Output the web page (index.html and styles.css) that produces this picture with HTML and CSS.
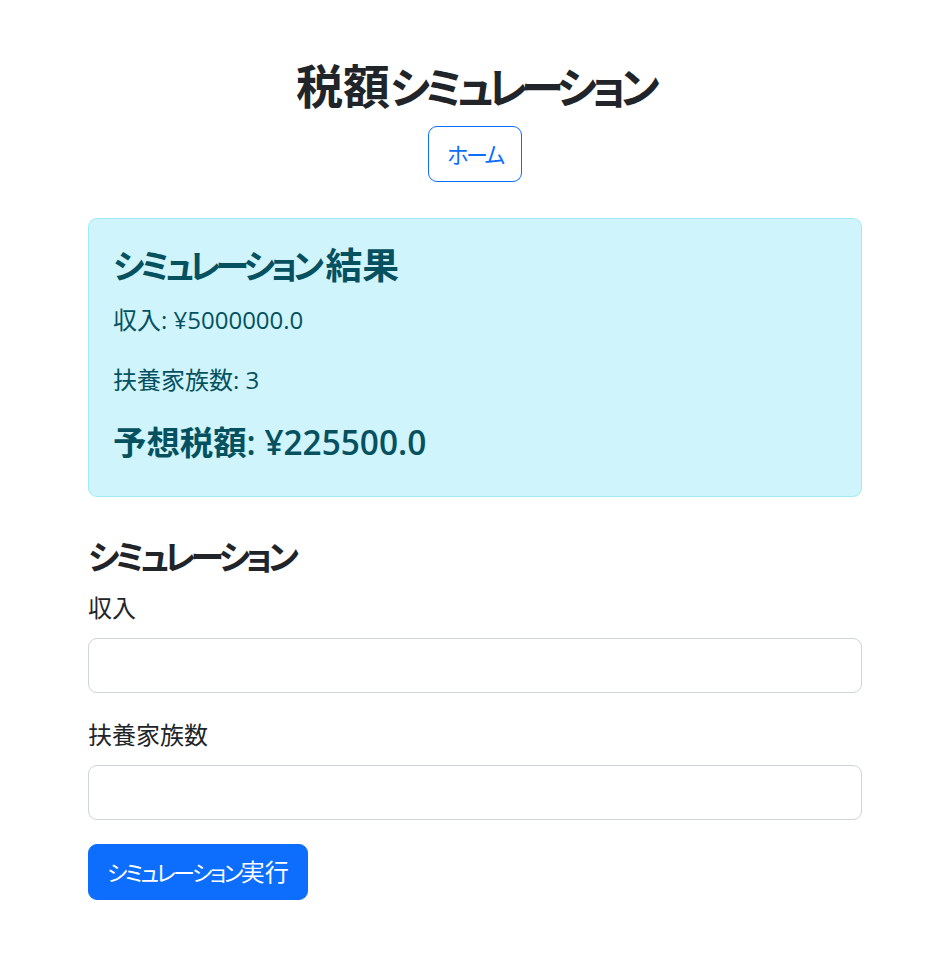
FILE: index.html
```html
<!DOCTYPE html>
<html lang="ja">
<head>
<meta charset="utf-8">
<title>税額シミュレーション</title>
<link rel="stylesheet" href="styles.css">
</head>
<body>
<div class="page">
  <h1 class="title">税額<span class="kana">シミュレーション</span></h1>
  <div class="nav">
    <a class="btn btn-outline" href="#"><span class="kana">ホーム</span></a>
  </div>

  <div class="alert">
    <h3 class="alert-heading"><span class="kana">シミュレーション</span>結果</h3>
    <p class="alert-line">収入: ¥5000000.0</p>
    <p class="alert-line">扶養家族数: 3</p>
    <h4 class="alert-result">予想税額: ¥225500.0</h4>
  </div>

  <h3 class="section-title"><span class="kana">シミュレーション</span></h3>
  <form class="form">
    <div class="field">
      <label class="label" for="income">収入</label>
      <input class="input" id="income" type="text">
    </div>
    <div class="field">
      <label class="label" for="deps">扶養家族数</label>
      <input class="input" id="deps" type="text">
    </div>
    <button class="btn btn-primary" type="button"><span class="kana">シミュレーション</span>実行</button>
  </form>
</div>
</body>
</html>
```

FILE: styles.css
```css
* { box-sizing: border-box; }

body {
  margin: 0;
  background: #fff;
  color: #212529;
  font-family: "Open Sans", "Noto Sans CJK JP", sans-serif;
  font-size: 24px;
  line-height: 1.5;
}

.kana {
  font-size: 0.92em;
  font-feature-settings: "palt";
  letter-spacing: -0.115em;
}

.title .kana,
.alert-heading .kana,
.section-title .kana {
  letter-spacing: -0.135em;
}

.alert-heading .kana {
  padding-right: 0.18em;
}

.page {
  padding: 58px 78px 40px 88px;
}

.title {
  margin: 0 0 12px;
  font-size: 47px;
  line-height: 1.2;
  font-weight: 700;
  text-align: center;
}

.nav {
  display: flex;
  justify-content: center;
  margin-bottom: 36px;
}

.btn {
  display: inline-block;
  padding: 9px 18px;
  font-family: "Open Sans", "Noto Sans CJK JP", sans-serif;
  font-size: 24px;
  line-height: 36px;
  border-radius: 9px;
  text-decoration: none;
  cursor: pointer;
}

.btn-outline {
  color: #0d6efd;
  border: 1px solid #0d6efd;
  background: transparent;
}

.btn-primary {
  color: #fff;
  background: #0d6efd;
  border: 1px solid #0d6efd;
}

.alert {
  background: #cff4fc;
  border: 1px solid #9eeaf9;
  border-radius: 9px;
  color: #055160;
  padding: 24px 24px 22px;
  margin-bottom: 37px;
}

.alert-heading {
  margin: 0 0 14px;
  font-size: 36.8px;
  line-height: 1.2;
  font-weight: 700;
}

.alert-line {
  margin: 0 0 24px;
}

.alert-result {
  margin: 0 0 12px;
  font-size: 33.4px;
  line-height: 1.2;
  font-weight: 600;
}

.section-title {
  margin: 0 0 12px;
  font-size: 36.8px;
  line-height: 1.2;
  font-weight: 700;
}

.form {
  display: flex;
  flex-direction: column;
  align-items: flex-start;
}

.field {
  display: flex;
  flex-direction: column;
  width: 100%;
  margin-bottom: 24px;
}

.label {
  margin-bottom: 12px;
}

.input {
  width: 100%;
  height: 55px;
  padding: 9px 18px;
  font-family: inherit;
  font-size: 24px;
  border: 1px solid #ced4da;
  border-radius: 9px;
  background: #fff;
}
```
